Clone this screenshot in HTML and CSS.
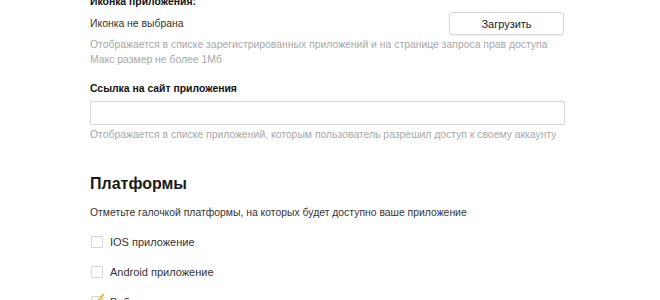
FILE: index.html
```html
<!DOCTYPE html>
<html lang="ru">
<head>
  <meta charset="UTF-8" />
  <title>Настройки приложения</title>
  <link rel="stylesheet" href="styles.css">
</head>
<body>
  <div class="form">
    <div class="field">
      <div class="label">Иконка приложения:</div>
      <div class="upload-row">
        <span class="value">Иконка не выбрана</span>
        <button class="btn">Загрузить</button>
      </div>
      <div class="hint">Отображается в списке зарегистрированных приложений и на странице запроса прав доступа<br>Макс размер не более 1Мб</div>
    </div>

    <div class="field field-link">
      <div class="label">Ссылка на сайт приложения</div>
      <input class="input" type="text">
      <div class="hint">Отображается в списке приложений, которым пользователь разрешил доступ к своему аккаунту</div>
    </div>

    <h2 class="section-title">Платформы</h2>
    <p class="desc">Отметьте галочкой платформы, на которых будет доступно ваше приложение</p>

    <div class="checks">
      <label class="check"><span class="box"></span>IOS приложение</label>
      <label class="check"><span class="box"></span>Android приложение</label>
      <label class="check"><span class="box checked"><svg width="14" height="12" viewBox="0 0 14 12"><path d="M1 7 L5 10.5 L13 1" fill="none" stroke="#e9c23a" stroke-width="2"/></svg></span>Веб-сервисы</label>
    </div>
  </div>
</body>
</html>
```

FILE: styles.css
```css
body {
  margin: 0;
  font-family: "Liberation Sans", Arial, sans-serif;
  background-color: #fff;
  color: #222;
  font-size: 10.4px;
}

.form {
  width: 474px;
  margin: -6px 0 0 90px;
}

.label {
  font-weight: bold;
  line-height: 15px;
  color: #111;
}

.upload-row {
  display: flex;
  justify-content: space-between;
  align-items: center;
  margin-top: 3px;
}

.value {
  color: #333;
}

.btn {
  width: 115px;
  height: 23px;
  background-color: #fff;
  border: 1px solid #d6d6d6;
  border-radius: 3px;
  font-family: inherit;
  font-size: 11px;
  color: #222;
  padding: 0;
  box-shadow: 0 1px 1px rgba(0,0,0,0.06);
}

.hint {
  color: #a8a8a8;
  line-height: 15px;
  margin-top: 2px;
  white-space: nowrap;
}

.field-link {
  margin-top: 14px;
}

.input {
  display: block;
  box-sizing: border-box;
  width: 475px;
  height: 24px;
  margin-top: 5px;
  border: 1px solid #d9d9d9;
  border-radius: 0;
  padding: 0 6px;
  outline: none;
}

.section-title {
  margin: 31px 0 0;
  font-size: 16px;
  line-height: 22px;
  font-weight: bold;
  color: #1a1a1a;
}

.desc {
  margin: 10px 0 0;
  line-height: 15px;
  color: #333;
  white-space: nowrap;
}

.checks {
  margin-top: 14px;
  display: flex;
  flex-direction: column;
  gap: 15px;
}

.check {
  display: flex;
  align-items: center;
  gap: 7px;
  height: 15px;
  color: #333;
  font-size: 11px;
}

.box {
  position: relative;
  width: 10px;
  height: 10px;
  margin-left: 1px;
  border: 1px solid #d4d4d4;
  border-radius: 1px;
  background-color: #fff;
}

.box svg {
  position: absolute;
  left: -1px;
  top: -4px;
}
```
